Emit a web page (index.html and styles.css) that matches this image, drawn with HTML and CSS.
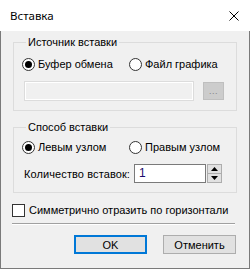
FILE: index.html
```html
<!DOCTYPE html>
<html lang="ru">
<head>
  <meta charset="UTF-8" />
  <title>Вставка</title>
  <link rel="stylesheet" href="styles.css">
</head>
<body>
  <div class="window">
    <div class="titlebar">
      <span class="title">Вставка</span>
      <svg class="close" width="10" height="10" viewBox="0 0 10 10">
        <path d="M0.5 0.5 L9.5 9.5 M9.5 0.5 L0.5 9.5" stroke="#000" stroke-width="1" fill="none"/>
      </svg>
    </div>
    <div class="dialog">
      <fieldset class="group group-source">
        <legend>Источник вставки</legend>
        <div class="radio-row">
          <label class="radio checked"><span class="dot"></span>Буфер обмена</label>
          <label class="radio"><span class="dot"></span>Файл графика</label>
        </div>
        <div class="file-row">
          <div class="file-field"></div>
          <div class="browse">...</div>
        </div>
      </fieldset>

      <fieldset class="group group-mode">
        <legend>Способ вставки</legend>
        <div class="radio-row">
          <label class="radio checked"><span class="dot"></span>Левым узлом</label>
          <label class="radio"><span class="dot"></span>Правым узлом</label>
        </div>
        <div class="count-row">
          <span class="count-label">Количество вставок:</span>
          <div class="count-input">1</div>
          <div class="spin">
            <div class="spin-btn"><svg width="7" height="4" viewBox="0 0 7 4"><path d="M3.5 0 L7 4 L0 4 Z" fill="#000"/></svg></div>
            <div class="spin-btn"><svg width="7" height="4" viewBox="0 0 7 4"><path d="M0 0 L7 0 L3.5 4 Z" fill="#000"/></svg></div>
          </div>
        </div>
      </fieldset>

      <label class="check"><span class="box"></span>Симметрично отразить по горизонтали</label>
      <div class="separator"></div>
      <div class="buttons">
        <button class="btn btn-default">OK</button>
        <button class="btn">Отменить</button>
      </div>
    </div>
  </div>
</body>
</html>
```

FILE: styles.css
```css
html, body {
  margin: 0;
  padding: 0;
}
body {
  font-family: 'Liberation Sans', Arial, sans-serif;
  font-size: 11px;
  color: #000;
  background: #fff;
}
.window {
  width: 250px;
  height: 269px;
  display: flex;
  flex-direction: column;
  box-sizing: border-box;
}
.titlebar {
  height: 31px;
  flex: none;
  display: flex;
  align-items: center;
  justify-content: space-between;
  padding: 0 11px 0 10px;
  background: #fff;
  box-sizing: border-box;
}
.title {
  font-family: 'Noto Sans', 'Liberation Sans', sans-serif;
  font-size: 11.5px;
}
.dialog {
  flex: 1;
  background: #f0f0f0;
  border: 1px solid #7a7a7a;
  border-top: none;
  padding: 4px 12px 0 11px;
  display: flex;
  flex-direction: column;
}
.group {
  margin: 0 0 0 1px;
  padding: 0 0 9px 8px;
  border: 1px solid #dcdcdc;
  min-width: 0;
}
.group legend {
  margin-left: 4px;
  padding: 0 2px;
  line-height: 14px;
}
.group-mode {
  margin-top: 9px;
}
.radio-row {
  display: flex;
  height: 16px;
  align-items: center;
  margin-top: 7px;
}
.group-mode .radio-row {
  margin-top: 5px;
}
.radio {
  display: flex;
  align-items: center;
  gap: 3px;
}
.radio:first-child {
  width: 107px;
}
.dot {
  width: 11px;
  height: 11px;
  border: 1px solid #333;
  border-radius: 50%;
  background: #fff;
  display: flex;
  align-items: center;
  justify-content: center;
}
.radio.checked .dot::after {
  content: "";
  width: 7px;
  height: 7px;
  border-radius: 50%;
  background: #000;
}
.file-row {
  display: flex;
  align-items: center;
  margin-top: 9px;
  padding-left: 2px;
}
.file-field {
  width: 166px;
  height: 16px;
  border: 1px solid #dcdcdc;
  box-shadow: inset 0 0 0 1px #fff;
  padding: 1px;
  background: #f0f0f0;
}
.browse {
  margin-left: 9px;
  width: 19px;
  height: 16px;
  background: #cccccc;
  border: 1px solid #bfbfbf;
  color: #838383;
  font-size: 9px;
  display: flex;
  align-items: center;
  justify-content: center;
  line-height: 1;
  letter-spacing: 0.5px;
}
.count-row {
  display: flex;
  align-items: center;
  margin-top: 9px;
  padding-left: 2px;
}
.count-label {
  width: 110px;
  letter-spacing: 0.1px;
}
.count-input {
  width: 66px;
  height: 17px;
  border: 1px solid #7a7a7a;
  background: #fff;
  padding-left: 4px;
  font-size: 12px;
  line-height: 17px;
  color: #1a0a6b;
}
.spin {
  margin-left: 1px;
  display: flex;
  flex-direction: column;
}
.spin-btn {
  width: 13px;
  height: 8px;
  background: #e1e1e1;
  border: 1px solid #adadad;
  display: flex;
  align-items: center;
  justify-content: center;
}
.spin-btn + .spin-btn {
  border-top: none;
}
.check {
  display: flex;
  align-items: center;
  gap: 4px;
  margin-top: 10px;
  height: 14px;
}
.box {
  width: 11px;
  height: 11px;
  border: 1px solid #333;
  background: #fff;
}
.separator {
  margin-top: 6px;
  height: 1px;
  width: 223px;
  background: #a0a0a0;
  border-bottom: 1px solid #fff;
}
.buttons {
  display: flex;
  justify-content: flex-end;
  gap: 16px;
  margin-top: 10px;
  padding-right: 1px;
}
.btn {
  width: 73px;
  height: 19px;
  box-sizing: border-box;
  margin: 0;
  padding: 0;
  font-family: 'Liberation Sans', Arial, sans-serif;
  font-size: 11px;
  color: #000;
  background: #e1e1e1;
  border: 1px solid #adadad;
  border-radius: 0;
}
.btn-default {
  border: 2px solid #0078d7;
}
```
